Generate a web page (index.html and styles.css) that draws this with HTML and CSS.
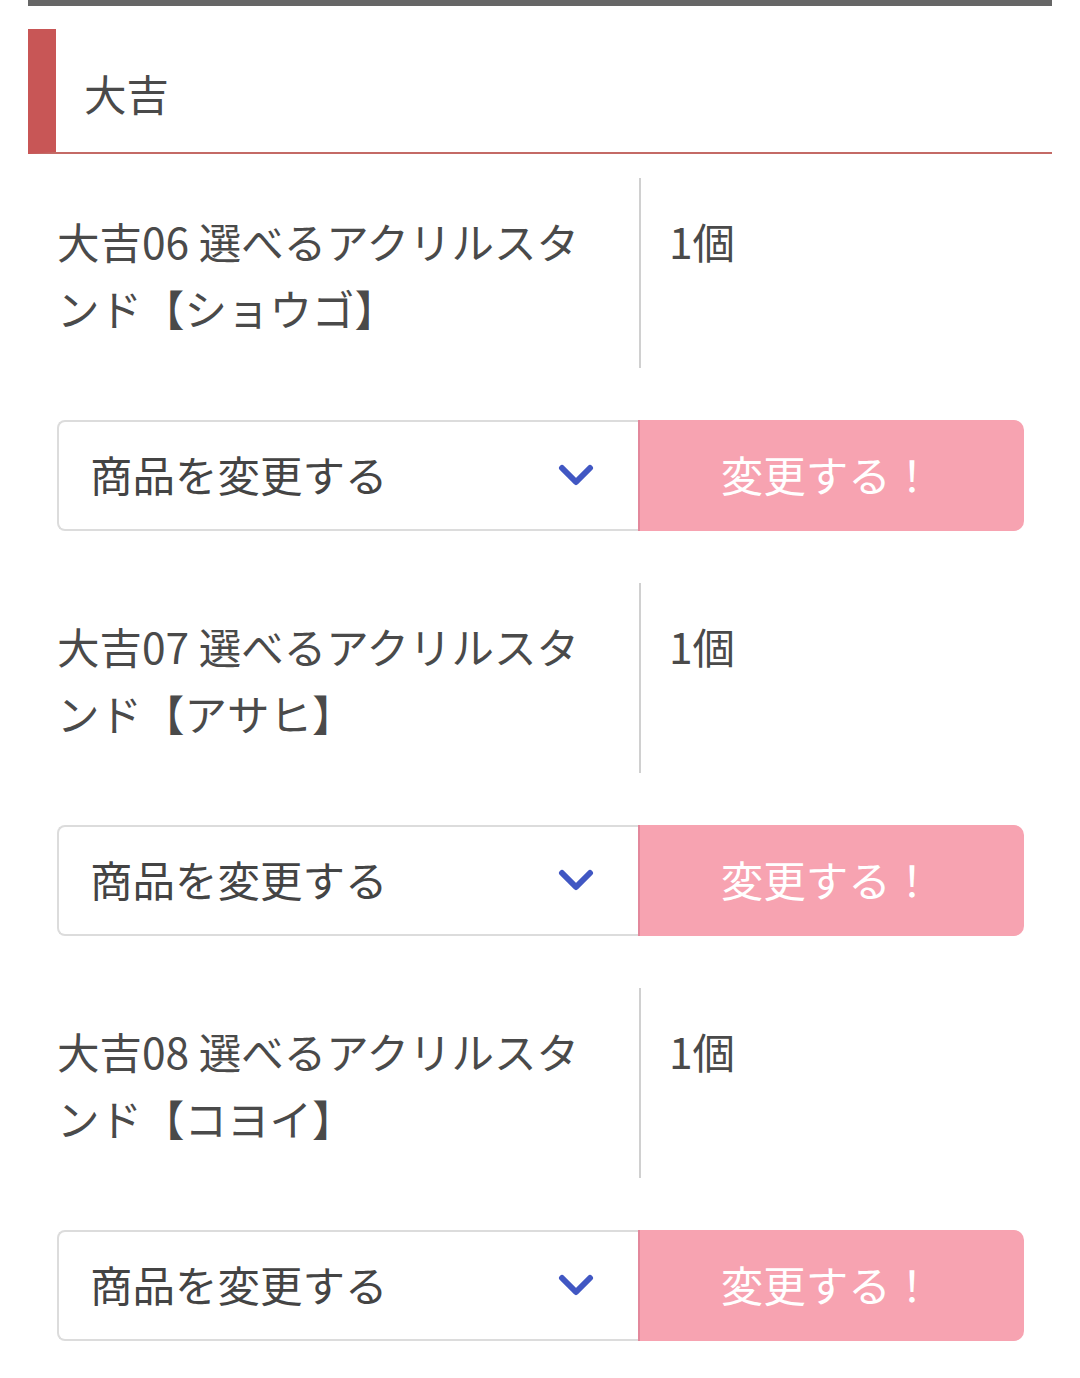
FILE: index.html
```html
<!DOCTYPE html>
<html lang="ja">
<head>
<meta charset="UTF-8">
<meta name="viewport" content="width=device-width, initial-scale=1.0">
<title>大吉</title>
<link rel="stylesheet" href="styles.css">
</head>
<body>
<div class="page">
    <div class="top-bar"></div>
    <h2 class="rank-title">大吉</h2>

    <div class="item">
        <div class="item-row">
            <div class="item-name">大吉06 選べるアクリルスタンド【ショウゴ】</div>
            <div class="item-qty">1個</div>
        </div>
        <div class="change-form">
            <div class="select-box">
                <span>商品を変更する</span>
                <svg class="chevron" width="36" height="24" viewBox="0 0 36 24"><path d="M4 4 L18 18 L32 4" fill="none" stroke="#4157c3" stroke-width="6" stroke-linecap="round" stroke-linejoin="round"/></svg>
            </div>
            <button class="change-btn">変更する！</button>
        </div>
    </div>

    <div class="item">
        <div class="item-row">
            <div class="item-name">大吉07 選べるアクリルスタンド【アサヒ】</div>
            <div class="item-qty">1個</div>
        </div>
        <div class="change-form">
            <div class="select-box">
                <span>商品を変更する</span>
                <svg class="chevron" width="36" height="24" viewBox="0 0 36 24"><path d="M4 4 L18 18 L32 4" fill="none" stroke="#4157c3" stroke-width="6" stroke-linecap="round" stroke-linejoin="round"/></svg>
            </div>
            <button class="change-btn">変更する！</button>
        </div>
    </div>

    <div class="item">
        <div class="item-row">
            <div class="item-name">大吉08 選べるアクリルスタンド【コヨイ】</div>
            <div class="item-qty">1個</div>
        </div>
        <div class="change-form">
            <div class="select-box">
                <span>商品を変更する</span>
                <svg class="chevron" width="36" height="24" viewBox="0 0 36 24"><path d="M4 4 L18 18 L32 4" fill="none" stroke="#4157c3" stroke-width="6" stroke-linecap="round" stroke-linejoin="round"/></svg>
            </div>
            <button class="change-btn">変更する！</button>
        </div>
    </div>
</div>
</body>
</html>
```

FILE: styles.css
```css
body {
    margin: 0;
    font-family: "Noto Sans CJK JP", "Noto Sans", sans-serif;
    color: #4a4a4a;
    background: #fff;
}
.page {
    padding: 0 28px;
}
.top-bar {
    height: 6px;
    background-color: #666;
}
.rank-title {
    margin: 23px 0 0 0;
    padding: 34px 0 29px 28px;
    font-size: 42.5px;
    font-weight: normal;
    line-height: 60px;
    border-left: 28px solid #c85656;
    border-bottom: 2px solid #c46a66;
}
.item {
    padding: 24px 28px 0 29px;
}
.item + .item {
    padding-top: 52px;
}
.item-row {
    display: flex;
}
.item-name {
    width: 552px;
    padding: 29px 30px 27px 0;
    font-size: 42.5px;
    line-height: 67px;
    border-right: 2px solid #d0d0d0;
}
.item-qty {
    padding: 29px 0 0 28px;
    font-size: 42.5px;
    line-height: 67px;
}
.change-form {
    display: flex;
    margin-top: 52px;
    height: 111px;
}
.select-box {
    width: 581px;
    box-sizing: border-box;
    display: flex;
    align-items: center;
    justify-content: space-between;
    padding: 0 44px 0 31px;
    border: 2px solid #dcdcdc;
    border-right: none;
    border-radius: 8px 0 0 8px;
    font-size: 42.5px;
    color: #444;
}
.select-box span {
    margin-bottom: 5px;
}
.chevron {
    display: block;
}
.change-btn {
    flex: 1;
    border: none;
    border-left: 2px solid #e3889c;
    background-color: #f7a3b1;
    color: #fff;
    font-family: inherit;
    font-size: 42.5px;
    border-radius: 0 10px 10px 0;
    padding: 0 10px 5px 0;
}
```
